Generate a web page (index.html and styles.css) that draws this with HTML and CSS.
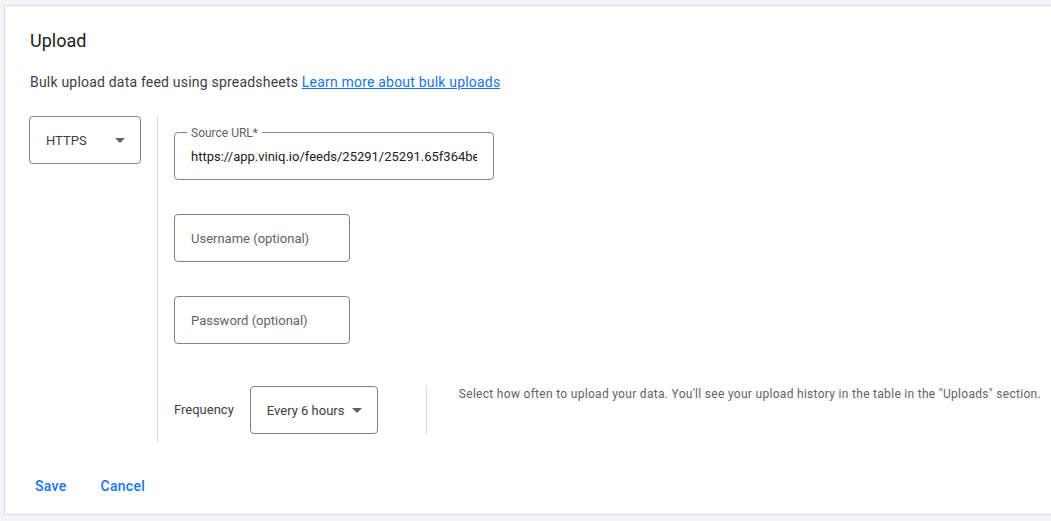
FILE: index.html
```html
<!DOCTYPE html>
<html>
<head>
<meta charset="utf-8">
<link rel="stylesheet" href="styles.css">
</head>
<body>
<div class="card">
  <h1 class="title">Upload</h1>
  <p class="subtitle">Bulk upload data feed using spreadsheets <a href="#" class="link">Learn more about bulk uploads</a></p>
  <div class="main">
    <div class="select protocol">
      <span class="select-text">HTTPS</span>
      <svg class="arrow" width="24" height="24" viewBox="0 0 24 24"><path d="M7 10l5 5 5-5z"/></svg>
    </div>
    <div class="fields">
      <div class="field url">
        <span class="float-label">Source URL*</span>
        <input class="input" type="text" value="https://app.viniq.io/feeds/25291/25291.65f364be0c5a1.xml" readonly>
      </div>
      <div class="field short">
        <input class="input" type="text" placeholder="Username (optional)" readonly>
      </div>
      <div class="field short last">
        <input class="input" type="text" placeholder="Password (optional)" readonly>
      </div>
      <div class="freq-row">
        <span class="freq-label">Frequency</span>
        <div class="select freq">
          <span class="select-text">Every 6 hours</span>
          <svg class="arrow" width="24" height="24" viewBox="0 0 24 24"><path d="M7 10l5 5 5-5z"/></svg>
        </div>
        <div class="freq-help">Select how often to upload your data. You'll see your upload history in the table in the "Uploads" section.</div>
      </div>
    </div>
  </div>
  <div class="actions">
    <button class="btn">Save</button>
    <button class="btn">Cancel</button>
  </div>
</div>
</body>
</html>
```
FILE: styles.css
```css
html, body {
  margin: 0;
  padding: 0;
  background: #f1f3f4;
  font-family: Roboto, "Liberation Sans", Arial, sans-serif;
}
.card {
  margin: 5px 0 0 4px;
  height: 508px;
  background: #fff;
  border: 1px solid #dadce0;
  border-right: none;
  padding: 0 0 0 24px;
  box-sizing: content-box;
}
.title {
  margin: 23px 0 0 1px;
  font-size: 18px;
  line-height: 24px;
  font-weight: 400;
  color: #202124;
}
.subtitle {
  margin: 19px 0 0 1px;
  font-size: 14px;
  line-height: 20px;
  color: #3c4043;
  letter-spacing: 0.2px;
}
.link {
  color: #1a73e8;
  text-decoration: underline;
}
.main {
  margin-top: 24px;
  display: flex;
  align-items: flex-start;
}
.select {
  box-sizing: border-box;
  height: 48px;
  border: 1px solid #80868b;
  border-radius: 4px;
  display: flex;
  align-items: center;
  justify-content: space-between;
  padding: 0 8px 0 16px;
  color: #3c4043;
  font-size: 13px;
  white-space: nowrap;
}
.select .arrow {
  fill: #5f6368;
  flex: none;
}
.protocol {
  width: 112px;
  margin-right: 16px;
}
.fields {
  border-left: 1px solid #dadce0;
  padding: 16px 0 8px 16px;
  display: flex;
  flex-direction: column;
  flex: 1;
}
.field {
  position: relative;
  box-sizing: border-box;
  height: 48px;
  border: 1px solid #80868b;
  border-radius: 4px;
  margin-bottom: 34px;
}
.field.url { width: 320px; }
.field.short { width: 176px; }
.field.last { margin-bottom: 42px; }
.input {
  box-sizing: border-box;
  width: 100%;
  height: 100%;
  border: none;
  outline: none;
  background: transparent;
  padding: 0 16px;
  font-family: Roboto, "Liberation Sans", Arial, sans-serif;
  font-size: 13px;
  color: #202124;
}
.input::placeholder {
  color: #5f6368;
  opacity: 1;
}
.float-label {
  position: absolute;
  left: 12px;
  top: -7px;
  padding: 0 4px;
  background: #fff;
  font-size: 12px;
  line-height: 14px;
  color: #5f6368;
}
.freq-row {
  display: flex;
  align-items: flex-start;
}
.freq-label {
  font-size: 13px;
  line-height: 48px;
  color: #3c4043;
  margin-right: 16px;
}
.freq {
  width: 128px;
}
.freq-help {
  margin-left: 48px;
  border-left: 1px solid #dadce0;
  height: 48px;
  padding-left: 32px;
  font-size: 12px;
  line-height: 16px;
  color: #5f6368;
  letter-spacing: 0.3px;
  white-space: nowrap;
}
.actions {
  margin-top: 26px;
  display: flex;
  gap: 18px;
  margin-left: -2px;
}
.btn {
  height: 36px;
  padding: 0 8px;
  border: none;
  background: transparent;
  color: #1a73e8;
  font-family: Roboto, "Liberation Sans", Arial, sans-serif;
  font-size: 14px;
  font-weight: 500;
  letter-spacing: 0.3px;
  cursor: pointer;
}
```
